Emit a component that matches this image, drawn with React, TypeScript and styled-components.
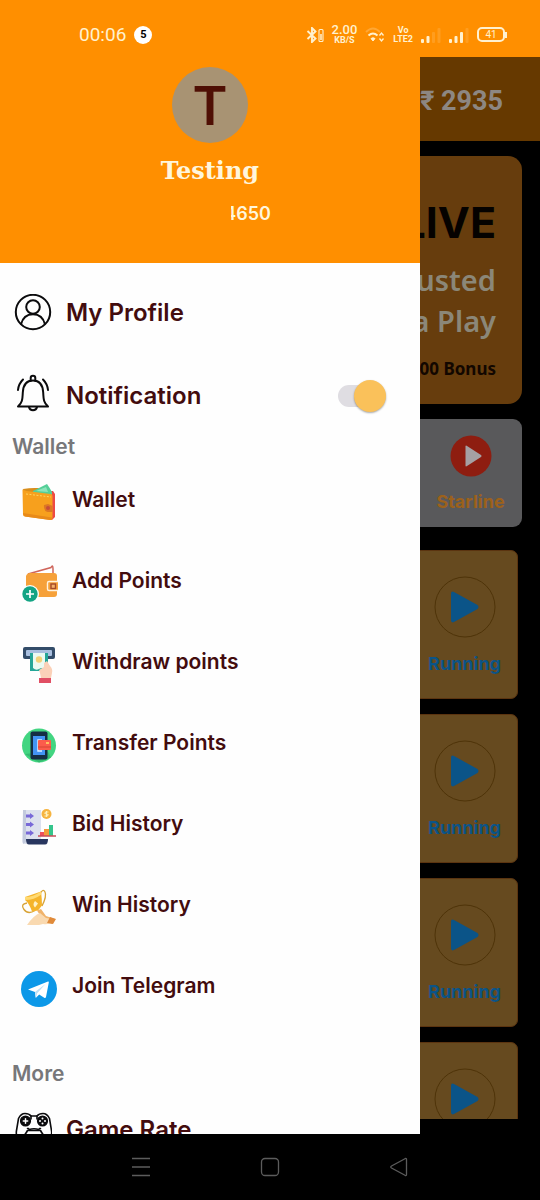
import React from "react";
import styled, { createGlobalStyle } from "styled-components";

const color = {
  brand: "#ff8f00",
  maroon: "#430c0e",
  muted: "#77777a",
  amber: "#fac15a",
  track: "#dfdde2",
  dimBar: "#663900",
  dimBanner: "#673d0d",
  dimTile: "#59595b",
  dimCard: "#664a1f",
  dimBlue: "#0b5488",
};

const GlobalStyle = createGlobalStyle`
  * { box-sizing: border-box; }
  body { margin: 0; background: #000; font-family: Inter, "Liberation Sans", sans-serif; }
  button { font: inherit; color: inherit; background: none; border: 0; padding: 0; text-align: left; cursor: pointer; }
  h1, h2, h3, p, ul { margin: 0; padding: 0; font-weight: inherit; }
  ul { list-style: none; }
  svg { display: block; flex: none; }
`;

const Screen = styled.div`
  display: flex;
  flex-direction: column;
  height: 100vh;
  background: #000;
  overflow: hidden;
`;

const StatusBar = styled.header`
  display: flex;
  align-items: center;
  justify-content: space-between;
  height: 57px;
  padding: 12px 33px 0 79px;
  background: ${color.brand};
  color: #fff1cf;
  flex: none;
`;

const StatusGroup = styled.div`
  display: flex;
  align-items: center;
  gap: 8px;
`;

const Clock = styled.span`
  font: 400 19px/24px Roboto, sans-serif;
`;

const CountBadge = styled.span`
  display: grid;
  place-items: center;
  width: 18px;
  height: 18px;
  border-radius: 50%;
  background: #fff;
  color: #000;
  font: 700 11px/18px Roboto, sans-serif;
`;

const Stacked = styled.span`
  display: flex;
  flex-direction: column;
  align-items: center;
  font: 500 13px/12px Roboto, sans-serif;
`;

const StackedUnit = styled.span`
  font-size: 9px;
  font-weight: 700;
  line-height: 9px;
`;

const Stage = styled.div`
  display: grid;
  grid-template: minmax(0, 1fr) / minmax(0, 1fr);
  flex: 1;
  min-height: 0;
`;

const Page = styled.main`
  grid-area: 1 / 1;
  margin-bottom: 15px;
  overflow: hidden;
`;

const AppBar = styled.div`
  display: flex;
  align-items: center;
  justify-content: flex-end;
  height: 84px;
  padding: 4px 37px 0 0;
  background: ${color.dimBar};
  color: #8d8782;
  font: 700 27px/32px Roboto, sans-serif;
`;

const Banner = styled.section`
  display: flex;
  flex-direction: column;
  align-items: flex-end;
  margin: 15px 18px 0;
  padding: 39px 26px 21px;
  border-radius: 14px;
  background: ${color.dimBanner};
  font-family: "Noto Sans", sans-serif;
  text-align: right;
`;

const BannerTitle = styled.h2`
  margin-bottom: 10px;
  color: #050200;
  font: 700 43px/54px Inter, sans-serif;
`;

const BannerLine = styled.p`
  color: #8b8778;
  font-size: 29px;
  font-weight: 600;
  line-height: 41px;
`;

const BannerNote = styled.p`
  margin-top: 14px;
  color: #120700;
  font-size: 17px;
  font-weight: 700;
  line-height: 28px;
`;

const Tiles = styled.div`
  display: flex;
  justify-content: flex-end;
  margin: 15px 18px 0;
  border-radius: 9px;
  background: ${color.dimTile};
`;

const Tile = styled.button`
  display: flex;
  flex-direction: column;
  align-items: center;
  gap: 12px;
  width: 103px;
  height: 108px;
  padding-top: 16px;
  color: #9c611b;
`;

const TileLabel = styled.span`
  font: 700 18px/26px Inter, sans-serif;
`;

const Games = styled.ul`
  display: flex;
  flex-direction: column;
  gap: 15px;
  margin: 23px 22px 0;
`;

const Game = styled.li`
  display: flex;
  justify-content: flex-end;
  height: 149px;
  padding: 25px 16px 0;
  border: 1px solid #5b3410;
  border-radius: 7px;
  background: ${color.dimCard};
`;

const GameAction = styled.button`
  display: flex;
  flex-direction: column;
  align-items: center;
  gap: 13px;
  height: 101px;
  color: ${color.dimBlue};
`;

const GameState = styled.span`
  font: 700 18px/26px Inter, sans-serif;
`;

const Drawer = styled.aside`
  grid-area: 1 / 1;
  z-index: 1;
  display: flex;
  flex-direction: column;
  width: min(420px, 100%);
  background: #fefefe;
  color: ${color.maroon};
  overflow: hidden;
`;

const Account = styled.div`
  display: flex;
  flex-direction: column;
  align-items: center;
  height: 206px;
  margin-bottom: 8px;
  padding-top: 10px;
  background: ${color.brand};
  color: #fff6dc;
  flex: none;
`;

const Avatar = styled.div`
  display: grid;
  place-items: center;
  width: 76px;
  height: 76px;
  border-radius: 50%;
  background: #a89373;
  color: #4f0f04;
  font: 600 53px/78px Inter, sans-serif;
`;

const AccountName = styled.h1`
  margin-top: 12px;
  font: 700 24px/32px "DejaVu Serif", serif;
`;

const AccountPhone = styled.p`
  display: flex;
  padding-left: 82px;
  margin-top: 15px;
  font-size: 18px;
  font-weight: 600;
  line-height: 24px;
`;

const PhoneTail = styled.span`
  display: flex;
  justify-content: flex-end;
  width: 40px;
  overflow: hidden;
`;

const MainRow = styled.div`
  display: flex;
  align-items: center;
  justify-content: space-between;
  height: 83px;
  padding: 0 34px 0 14px;
  flex: none;
`;

const MainLink = styled.button`
  display: flex;
  align-items: center;
  gap: 14px;
  font-size: 24px;
  font-weight: 600;
  line-height: 32px;
`;

const Section = styled.h2`
  padding: 0 12px 4px;
  color: ${color.muted};
  font-size: 21px;
  font-weight: 600;
  line-height: 20px;
  flex: none;
`;

const Menu = styled.ul`
  display: flex;
  flex-direction: column;
  margin-bottom: 36px;
  flex: none;
`;

const MenuRow = styled.li`
  height: 81px;
`;

const MenuLink = styled.button`
  display: flex;
  align-items: flex-start;
  gap: 15px;
  width: 100%;
  padding: 23px 21px 0;
  font-size: 21px;
  font-weight: 600;
  line-height: 32px;
`;

const IconBox = styled.span`
  width: 36px;
  flex: none;
`;

const Toggle = styled.input`
  appearance: none;
  display: flex;
  align-items: center;
  width: 48px;
  height: 32px;
  margin: 0;
  cursor: pointer;

  &::before {
    content: "";
    width: 40px;
    height: 22px;
    margin-right: -24px;
    border-radius: 11px;
    background: ${color.track};
    flex: none;
  }

  &::after {
    content: "";
    width: 32px;
    height: 32px;
    border-radius: 50%;
    background: ${color.amber};
    box-shadow: 0 1px 2px rgba(0, 0, 0, 0.35);
    flex: none;
  }
`;

const NavBar = styled.nav`
  display: flex;
  align-items: center;
  justify-content: space-between;
  height: 66px;
  padding: 0 130px;
  background: #000;
  flex: none;
`;

const Bluetooth = () => (
  <svg width="18" height="16" viewBox="0 0 18 16" fill="none" stroke="currentColor" strokeWidth="1.900">
    <path d="M1.500 4l8 7.500L6 15V1l3.500 3.500L1.500 12" />
    <rect x="13" y="2.500" width="4" height="12" rx="1" strokeWidth="1.100" />
    <path d="M15 7v6" strokeWidth="1.500" />
  </svg>
);

const Wifi = () => (
  <svg width="20" height="17" viewBox="0 0 20 17" fill="none" stroke="currentColor" strokeWidth="1.900">
    <path d="M1 6Q8-1 15 6" opacity=".25" />
    <path d="M3.500 9.500Q8 5.500 12.500 9.500" />
    <path d="M6 12.500Q8 11 10 12.500L8 15z" fill="currentColor" strokeWidth="1" />
    <path d="M14.500 9.500l2-2.500 2 2.500M14.500 12.500l2 2.500 2-2.500" strokeWidth="1.300" />
  </svg>
);

const Signal = ({ bars }: { bars: number }) => (
  <svg width="20" height="16" viewBox="0 0 20 16" fill="currentColor">
    {[4, 7, 11, 15].map((h, i) => (
      <rect key={h} x={i * 5.5} y={16 - h} width="3" height={h} rx="1" opacity={i < bars ? 1 : 0.15} />
    ))}
  </svg>
);

const BatteryFrame = styled.span`
  display: flex;
  align-items: center;

  &::after {
    content: "";
    width: 2px;
    height: 6px;
    background: currentColor;
  }
`;

const BatteryLevel = styled.span`
  display: grid;
  place-items: center;
  width: 28px;
  height: 15px;
  border: 2px solid currentColor;
  border-radius: 5px;
  font: 400 10px/11px Roboto, sans-serif;
`;

const ProfileIcon = () => (
  <svg width="38" height="38" viewBox="0 0 38 38" fill="none" stroke="#0b0b0d" strokeWidth="2">
    <circle cx="19" cy="18" r="17.200" />
    <circle cx="19" cy="13" r="6.800" />
    <path d="M7 30.500C8.500 24 13 20.200 19 20.200S29.500 24 31 30.500" />
  </svg>
);

const BellIcon = () => (
  <svg width="38" height="44" viewBox="0 0 38 44" fill="none" stroke="#0b0b0d" strokeWidth="2" strokeLinejoin="round" strokeLinecap="round">
    <path d="M4 32.500C8 29 8.500 26 8.800 18.500 9.200 11 12.500 6.500 19 6.500S28.800 11 29.200 18.500C29.500 26 30 29 34 32.500z" />
    <path d="M16.700 6.600V4a2.300 2.300 0 0 1 4.600 0V6.600M15 33c.8 4.200 7.200 4.200 8 0" />
    <path d="M9 5.500Q4.500 10 4 16M29 5.500Q33.500 10 34 16" />
  </svg>
);

const WalletIcon = () => (
  <svg width="36" height="38" viewBox="0 0 36 38">
    <path d="M26 7l6 0 2 3v23l-3 3-5-1z" fill="#ed4a45" />
    <path d="M2 5q8-1.500 15-1l13 3v5L3 11z" fill="#d88d1c" />
    <path d="M12 7l6-3 8-4 2 3 3 5v3L12 9z" fill="#55cf98" />
    <path d="M15 7l10-4 2 5" fill="#8be4ba" />
    <path d="M1.500 5.500l4 1.500 24 3q2 0 2 2v22q0 2-2 2L4 32.500q-2 0-2-2z" fill="#f7a01d" />
    <path d="M2 29l29 4.500q0 3-2 2.500L4 32.500q-2-1-2-3.500z" fill="#e88a19" />
    <path d="M5 10l25 3" stroke="#ffd45b" strokeWidth="1" strokeDasharray="2 1.500" />
    <path d="M23 21l4-1 4.500 2v6h-5q-4-1-3.500-7z" fill="#dc7724" />
    <circle cx="27" cy="24" r="2" fill="#c84c38" />
  </svg>
);

const AddPointsIcon = () => (
  <svg width="38" height="38" viewBox="0 0 38 38">
    <path d="M7 9L30 2.500Q32-1 32 4v5" fill="#fff" stroke="#cf655b" strokeWidth="1.500" />
    <path d="M5 11Q6 8 9 8h24q3 0 3 3v18q0 3-3 3H8q-3 0-3-3z" fill="#f6a13a" />
    <path d="M37 16.500H28q-1.500 0-1.500 1.500v6q0 1.500 1.500 1.500h9" fill="#f6a13a" stroke="#fff3df" strokeWidth="1.400" />
    <rect x="30" y="19" width="4.500" height="4.500" fill="#f4b06a" stroke="#a44a2b" strokeWidth="1.400" />
    <circle cx="9" cy="29" r="9" fill="#fff" />
    <circle cx="9" cy="29" r="7.700" fill="#14a484" />
    <path d="M9 25v8M5 29h8" stroke="#fff" strokeWidth="1.700" />
  </svg>
);

const WithdrawIcon = () => (
  <svg width="38" height="38" viewBox="0 0 38 38">
    <rect x="2" y="1" width="32" height="12" rx="2" fill="#334c69" />
    <rect x="5" y="4" width="26" height="6" rx="1" fill="#a9bfdf" />
    <path d="M9 7h18v18H9z" fill="#24a697" />
    <path d="M12 7h12v16q-3-2-6 0-3 2-6-1z" fill="#eafaf2" />
    <circle cx="18" cy="13.500" r="3.200" fill="#f2d279" />
    <path d="M18 24l5-3V17l3-2 3 5q3 3 2 7l-1 5H20l-1-5z" fill="#fbd1b8" />
    <path d="M18 32h12v5H18z" fill="#e14f64" />
  </svg>
);

const TransferIcon = () => (
  <svg width="36" height="38" viewBox="0 0 36 38">
    <circle cx="18" cy="18.500" r="17" fill="#42d581" />
    <path d="M4 27L18 35.500l12-5-3-6z" fill="#35ba70" />
    <rect x="9.500" y="4.500" width="17" height="28" rx="2" fill="#152f45" />
    <rect x="12" y="9" width="12" height="19" fill="#4294f4" />
    <path d="M21 13h-4v11h4" fill="none" stroke="#d9ebff" strokeWidth="1.500" />
    <rect x="17" y="13" width="13" height="10" rx="1" fill="#fb5c4c" />
    <path d="M17 20h13" stroke="#e8503f" strokeWidth="2" />
    <rect x="25" y="15" width="3" height="2" fill="#ffc15c" />
  </svg>
);

const BidIcon = () => (
  <svg width="36" height="38" viewBox="0 0 36 38">
    <path d="M2 2h18v29l5 5H4q-3 0-3-3z" fill="#dce1ee" />
    <path d="M2 2h3v32l-3 2z" fill="#c3cadd" />
    <path d="M5 31h22q0 5.500-3 5.500H8q-3 0-3-5.500z" fill="#28365f" />
    {[8, 16.5, 25].map((y) => (
      <path key={y} d={`M5 ${y - 1.5}h4v-1.500l4 3-4 3v-1.500H5z`} fill="#7869d8" />
    ))}
    <path d="M19 24h4v4h-4z" fill="#f14e5c" />
    <path d="M23 21h5v7h-5z" fill="#f49b3b" />
    <path d="M28 17h4v11h-4z" fill="#35c58c" />
    <path d="M17 28h18" stroke="#c74b58" strokeWidth="1.500" />
    <circle cx="25.500" cy="6" r="5" fill="#f6b440" />
    <path d="M27.500 4h-3q-2 2 1 2t1 2h-3M25.500 3v6" fill="none" stroke="#fff2bd" strokeWidth="1" />
  </svg>
);

const WinIcon = () => (
  <svg width="36" height="38" viewBox="0 0 36 38">
    <path d="M6 14Q-1 15 3 20.500t11 1M19 5q3-6 5-2t-3 14" fill="none" stroke="#d8a336" strokeWidth="1.300" />
    <path d="M4 8L20 2.500q1 8 1 14l-4 5-6 1Q8 14 4 11z" fill="#f5b42c" />
    <path d="M4 8q8 0 16-5.500l.5 3Q13 11 4 11z" fill="#ffda72" />
    <path d="M14 12l3 2.500-3 4q-3-3 0-6.500" fill="#fff2c9" />
    <path d="M16 21.500l4-1.500 5 7 9 3-3 5-9-4z" fill="#f0b36b" />
    <path d="M6 36q7-10 13-12l6 5 6 1 2 3q-6 3-11 2l-4 1z" fill="#f9d9b0" />
    <path d="M29 28l6 2-3 5-6-1z" fill="#e08a3a" />
  </svg>
);

const TelegramIcon = () => (
  <svg width="36" height="38" viewBox="0 0 36 38">
    <circle cx="18" cy="19" r="18" fill="#0c98e8" />
    <path d="M7 19.500L27 11.500q1-.3.8 1L25 27q-.4 1.500-1.800.8l-5-3.300-3 3q-.7.500-.7-.7L14 22z" fill="#fff" />
    <path d="M14 22L24.500 14 16 23.500l-1 4z" fill="#bcdff5" />
  </svg>
);

const GameIcon = () => (
  <svg width="38" height="38" viewBox="-1 0 38 38" fill="none" stroke="#0b0b0d" strokeWidth="1.600" strokeLinecap="round">
    <path d="M3.500 7.500Q6 2.500 10 2.500q4 0 6 2.500h6q2-2.500 6-2.500 4 0 6.500 5l2 12q1 6-3 7-4 .5-8-7H12.500q-4 7.500-8 7-4-1-3-7z" />
    <circle cx="10.500" cy="10" r="4.800" fill="#0b0b0d" />
    <circle cx="27.500" cy="10" r="4.800" fill="#0b0b0d" />
    <path d="M10.500 7.800v4.400M8.300 10h4.400" stroke="#fff" strokeWidth="1.500" />
    <g fill="#fff" stroke="none">
      <circle cx="27.500" cy="7.500" r="1" />
      <circle cx="27.500" cy="12.500" r="1" />
      <circle cx="25" cy="10" r="1" />
      <circle cx="30" cy="10" r="1" />
    </g>
    <path d="M16 5v3M22 5v3M14 18.500q5-1.500 10 0M12.500 17.500h1M24.500 17.500h1" />
  </svg>
);

const StarlineIcon = () => (
  <svg width="42" height="42" viewBox="0 0 42 42">
    <circle cx="21" cy="21" r="20.500" fill="#8e1d10" />
    <path d="M15.500 11.500v19q0 1.500 1.500.6L31 22q1.300-1 0-2L17 10.900q-1.500-.9-1.500.6z" fill="#a5a0a3" />
  </svg>
);

const PlayIcon = () => (
  <svg width="62" height="62" viewBox="0 0 62 62">
    <circle cx="31" cy="31" r="30" fill="none" stroke="#4e3308" strokeWidth="1" />
    <path d="M17 18v26q0 3.500 3 2L43.500 33q2-2 0-4L20 16q-3-1.500-3 2z" fill={color.dimBlue} />
  </svg>
);

const menu = [
  { label: "Wallet", Icon: WalletIcon },
  { label: "Add Points", Icon: AddPointsIcon },
  { label: "Withdraw points", Icon: WithdrawIcon },
  { label: "Transfer Points", Icon: TransferIcon },
  { label: "Bid History", Icon: BidIcon },
  { label: "Win History", Icon: WinIcon },
  { label: "Join Telegram", Icon: TelegramIcon },
];

const games = [1, 2, 3, 4];

export default function App() {
  return (
    <Screen>
      <GlobalStyle />
      <StatusBar>
        <StatusGroup>
          <Clock>00:06</Clock>
          <CountBadge>5</CountBadge>
        </StatusGroup>
        <StatusGroup>
          <Bluetooth />
          <Stacked>
            2.00
            <StackedUnit>KB/S</StackedUnit>
          </Stacked>
          <Wifi />
          <Stacked>
            <StackedUnit>Vo</StackedUnit>
            <StackedUnit>LTE2</StackedUnit>
          </Stacked>
          <Signal bars={2} />
          <Signal bars={3} />
          <BatteryFrame>
            <BatteryLevel>41</BatteryLevel>
          </BatteryFrame>
        </StatusGroup>
      </StatusBar>

      <Stage>
        <Page>
          <AppBar>₹ 2935</AppBar>
          <Banner>
            <BannerTitle>LIVE</BannerTitle>
            <BannerLine>usted</BannerLine>
            <BannerLine>a Play</BannerLine>
            <BannerNote>00 Bonus</BannerNote>
          </Banner>
          <Tiles>
            <Tile>
              <StarlineIcon />
              <TileLabel>Starline</TileLabel>
            </Tile>
          </Tiles>
          <Games>
            {games.map((id) => (
              <Game key={id}>
                <GameAction>
                  <PlayIcon />
                  <GameState>Running</GameState>
                </GameAction>
              </Game>
            ))}
          </Games>
        </Page>

        <Drawer>
          <Account>
            <Avatar>T</Avatar>
            <AccountName>Testing</AccountName>
            <AccountPhone>
              <PhoneTail>4650</PhoneTail>
            </AccountPhone>
          </Account>
          <MainRow>
            <MainLink>
              <ProfileIcon />
              My Profile
            </MainLink>
          </MainRow>
          <MainRow as="label">
            <MainLink as="span">
              <BellIcon />
              Notification
            </MainLink>
            <Toggle type="checkbox" role="switch" defaultChecked />
          </MainRow>
          <Section>Wallet</Section>
          <Menu>
            {menu.map(({ label, Icon }) => (
              <MenuRow key={label}>
                <MenuLink>
                  <IconBox>
                    <Icon />
                  </IconBox>
                  {label}
                </MenuLink>
              </MenuRow>
            ))}
          </Menu>
          <Section>More</Section>
          <MainRow>
            <MainLink>
              <GameIcon />
              Game Rate
            </MainLink>
          </MainRow>
        </Drawer>
      </Stage>

      <NavBar>
        <button aria-label="Recent apps">
          <svg width="22" height="22" viewBox="0 0 22 22" stroke="#5c5c5c" strokeWidth="1.500">
            <path d="M2 2.500h18M2 11h18M2 19.500h18" />
          </svg>
        </button>
        <button aria-label="Home">
          <svg width="20" height="20" viewBox="0 0 20 20" fill="none" stroke="#5c5c5c" strokeWidth="1.300">
            <rect x="1.500" y="1.500" width="17" height="17" rx="3.500" />
          </svg>
        </button>
        <button aria-label="Back">
          <svg width="22" height="22" viewBox="0 0 22 22" fill="none" stroke="#5c5c5c" strokeWidth="1.300" strokeLinejoin="round">
            <path d="M18.500 3.500v15q0 1.500-1.500.8L3.500 12q-1.500-1 0-2L17 2.700q1.500-.7 1.500.8z" />
          </svg>
        </button>
      </NavBar>
    </Screen>
  );
}
